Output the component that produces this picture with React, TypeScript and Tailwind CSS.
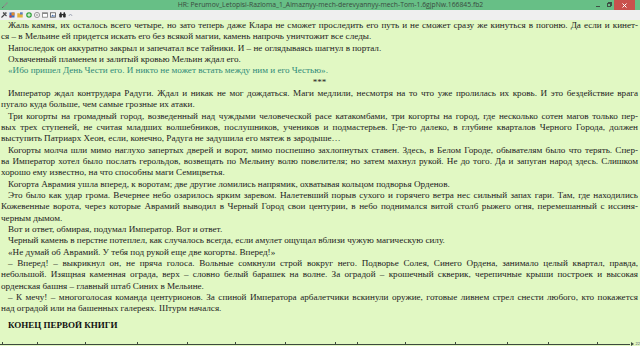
import React from "react";

type L = { t: string; i?: boolean; j?: boolean; c?: string; center?: boolean };

const lines: L[] = [
  { t: "Жаль камня, их осталось всего четыре, но зато теперь даже Клара не сможет проследить его путь и не сможет сразу же кинуться в погоню. Да если и кинет-", i: true, j: true },
  { t: "ся – в Мельине ей придется искать его без всякой магии, камень напрочь уничтожит все следы." },
  { t: "Напоследок он аккуратно закрыл и запечатал все тайники. И – не оглядываясь шагнул в портал.", i: true },
  { t: "Охваченный пламенем и залитый кровью Мельин ждал его.", i: true },
  { t: "«Ибо пришел День Чести его. И никто не может встать между ним и его Честью».", i: true, c: "teal" },
  { t: "***", center: true },
  { t: "Император ждал контрудара Радуги. Ждал и никак не мог дождаться. Маги медлили, несмотря на то что уже пролилась их кровь. И это бездействие врага", i: true, j: true },
  { t: "пугало куда больше, чем самые грозные их атаки." },
  { t: "Три когорты на громадный город, возведенный над чуждыми человеческой расе катакомбами, три когорты на город, где несколько сотен магов только пер-", i: true, j: true },
  { t: "вых трех ступеней, не считая младших волшебников, послушников, учеников и подмастерьев. Где-то далеко, в глубине кварталов Черного Города, должен", j: true },
  { t: "выступить Патриарх Хеон, если, конечно, Радуга не задушила его мятеж в зародыше…" },
  { t: "Когорты молча шли мимо наглухо запертых дверей и ворот, мимо поспешно захлопнутых ставен. Здесь, в Белом Городе, обывателям было что терять. Спер-", i: true, j: true },
  { t: "ва Император хотел было послать герольдов, возвещать по Мельину волю повелителя; но затем махнул рукой. Не до того. Да и запуган народ здесь. Слишком", j: true },
  { t: "хорошо ему известно, на что способны маги Семицветья." },
  { t: "Когорта Аврамия ушла вперед, к воротам; две другие ломились напрямик, охватывая кольцом подворья Орденов.", i: true },
  { t: "Это было как удар грома. Вечернее небо озарилось ярким заревом. Налетевший порыв сухого и горячего ветра нес сильный запах гари. Там, где находились", i: true, j: true },
  { t: "Кожевенные ворота, через которые Аврамий выводил в Черный Город свои центурии, в небо поднимался витой столб рыжего огня, перемешанный с иссиня-", j: true },
  { t: "черным дымом." },
  { t: "Вот и ответ, обмирая, подумал Император. Вот и ответ.", i: true },
  { t: "Черный камень в перстне потеплел, как случалось всегда, если амулет ощущал вблизи чужую магическую силу.", i: true },
  { t: "«Не думай об Аврамий. У тебя под рукой еще две когорты. Вперед!»", i: true },
  { t: "– Вперед! – выкрикнул он, не пряча голоса. Вольные сомкнули строй вокруг него. Подворье Солея, Синего Ордена, занимало целый квартал, правда,", i: true, j: true },
  { t: "небольшой. Изящная каменная ограда, верх – словно белый барашек на волне. За оградой – крошечный скверик, черепичные крыши построек и высокая", j: true },
  { t: "орденская башня – главный штаб Синих в Мельине." },
  { t: "– К мечу! – многоголосая команда центурионов. За спиной Императора арбалетчики вскинули оружие, готовые ливнем стрел снести любого, кто покажется", i: true, j: true },
  { t: "над оградой или на башенных галереях. Штурм начался." },
];

function Line({ l }: { l: L }) {
  const cls = [
    "h-[11.33px] leading-[11.33px] whitespace-nowrap",
    l.j ? "text-justify [text-align-last:justify]" : "",
    l.center ? "text-center" : "",
    l.i ? "indent-[7px]" : "",
    l.c === "teal" ? "text-[#2f8a78]" : "text-[#222]",
  ].join(" ");
  return <div className={cls}>{l.t}</div>;
}

function ToolIcons() {
  return (
    <div className="flex items-center gap-[1px] pl-[1px] h-full">
      <svg width="6" height="6" viewBox="0 0 6 6" className="mr-[1px]">
        <path d="M0.5 5.5 L4 2 M2 0.5 L5.5 4" stroke="#444" strokeWidth="1.1" />
        <rect x="3.6" y="0.3" width="2" height="1.6" fill="#555" />
      </svg>
      <svg width="6" height="6" viewBox="0 0 6 6" className="mr-[1px]">
        <rect x="0.5" y="0.5" width="5" height="5" fill="#3a6fc4" />
        <rect x="2.5" y="0.5" width="3" height="3" fill="#e58b2a" />
        <rect x="0.5" y="3.5" width="2" height="2" fill="#d23a3a" />
      </svg>
      <svg width="6" height="6" viewBox="0 0 6 6" className="mr-[2px]">
        <path d="M0.3 1.2 H2.5 L3 2 H5.7 V5.5 H0.3 Z" fill="#e3b33e" />
        <rect x="3" y="0.3" width="2.7" height="2.2" fill="#5a7fc0" />
      </svg>
      <svg width="6" height="6" viewBox="0 0 6 6" className="mr-[1px]">
        <circle cx="3" cy="3" r="2.8" fill="#2fa33a" />
        <path d="M3 1.3 V4.7 M1.3 3 H4.7" stroke="#fff" strokeWidth="1" />
      </svg>
      <svg width="6" height="6" viewBox="0 0 6 6" className="mr-[1px]">
        <circle cx="3" cy="3" r="2.6" fill="none" stroke="#9a9a9a" strokeWidth="1" />
        <circle cx="3" cy="3" r="1" fill="#b5b5b5" />
      </svg>
      <svg width="6" height="6" viewBox="0 0 6 6" className="mr-[1px]">
        <rect x="0.5" y="0.8" width="5" height="4.4" fill="#fff" stroke="#7a7a7a" strokeWidth="0.8" />
        <rect x="0.5" y="0.8" width="5" height="1.2" fill="#8a8a8a" />
      </svg>
      <svg width="6" height="6" viewBox="0 0 6 6" className="mr-[2px]">
        <rect x="0.5" y="0.8" width="5" height="4.4" fill="#fff" stroke="#555" strokeWidth="0.8" />
        <path d="M1 4.6 L2.5 2.6 L3.5 3.8 L4.3 3 L5 4.6 Z" fill="#4a6fa8" />
      </svg>
      <svg width="7" height="6" viewBox="0 0 7 6" className="mr-[1px]">
        <rect x="0.3" y="1.5" width="2.6" height="4" rx="0.8" fill="#2a2a2a" />
        <rect x="4.1" y="1.5" width="2.6" height="4" rx="0.8" fill="#2a2a2a" />
        <rect x="1" y="0.3" width="1.4" height="1.8" fill="#2a2a2a" />
        <rect x="4.6" y="0.3" width="1.4" height="1.8" fill="#2a2a2a" />
        <rect x="2.6" y="2" width="1.8" height="1.3" fill="#2a2a2a" />
      </svg>
      <svg width="5" height="6" viewBox="0 0 5 6">
        <path d="M0.8 4 L2.5 2 L4.2 4" fill="none" stroke="#9aa0b0" strokeWidth="0.9" />
      </svg>
    </div>
  );
}

export default function App() {
  const ticks = [37, 85, 137, 187, 235, 285, 335, 357, 405, 455, 507, 548, 597];
  return (
    <div className="w-[640px] h-[346px] flex flex-col overflow-hidden bg-[#e1f8c3]">
      <div className="h-[10px] flex items-center bg-[#67bf86] relative shrink-0">
        <svg width="8" height="8" viewBox="0 0 8 8" className="ml-[1px]">
          <path d="M1 7 L6 1 L7 2 L2 7 Z" fill="#8a8f8a" />
          <path d="M1 7 L2.5 5.5" stroke="#5a5f5a" strokeWidth="0.8" />
        </svg>
        <div className="flex-1 text-center text-[6.8px] leading-[10px] text-[#3a4a40] font-['Open_Sans','Liberation_Sans',sans-serif] pl-[60px]">
          HR: Perumov_Letopisi-Razloma_1_Almaznyy-mech-derevyannyy-mech-Tom-1.6gjpNw.166845.fb2
        </div>
        <div className="flex items-start h-full">
          <div className="w-[11px] h-[10px] flex items-center justify-center">
            <div className="w-[4px] h-[1px] bg-[#3e4f44] mt-[2px]" />
          </div>
          <div className="w-[11px] h-[10px] flex items-center justify-center">
            <div className="w-[4px] h-[4px] border border-[#3e4f44] relative">
              <div className="absolute -top-[2px] -right-[2px] w-[4px] h-[4px] border-t border-r border-[#3e4f44]" />
            </div>
          </div>
          <div className="w-[21px] h-[10px] bg-[#c9514d] mr-[5px] flex items-center justify-center">
            <svg width="5" height="5" viewBox="0 0 5 5">
              <path d="M0.5 0.5 L4.5 4.5 M4.5 0.5 L0.5 4.5" stroke="#fff" strokeWidth="1" />
            </svg>
          </div>
        </div>
      </div>
      <div className="h-[10px] bg-[#efefef] shrink-0">
        <ToolIcons />
      </div>
      <div className="flex-1 pl-[1px] pr-[2px] font-['Liberation_Serif','Times_New_Roman',serif] text-[9.15px]">
        {lines.map((l, k) => (
          <Line key={k} l={l} />
        ))}
        <div className="mt-[5.6px] h-[11.33px] leading-[11.33px] indent-[7px] font-bold text-[9px] text-[#111] whitespace-nowrap">
          КОНЕЦ ПЕРВОЙ КНИГИ
        </div>
      </div>
      <div className="h-[5px] relative shrink-0">
        <div className="absolute left-0 right-[10px] top-[3px] h-[1px] bg-[#3d4a3d]" />
        {ticks.map((x) => (
          <div key={x} className="absolute top-[1px] w-[1px] h-[3px] bg-[#3d4a3d]" style={{ left: x }} />
        ))}
        <div className="absolute left-[2px] top-[1px] w-[1px] h-[3px] bg-[#3d4a3d]" />
        <div className="absolute right-[6px] top-[1px] w-0 h-0 border-y-[2px] border-y-transparent border-l-[3px] border-l-[#3d4a3d]" />
        <div className="absolute right-0 top-[0px] text-[4px] leading-[5px] text-[#556] font-['Liberation_Sans',sans-serif]">22</div>
      </div>
    </div>
  );
}
